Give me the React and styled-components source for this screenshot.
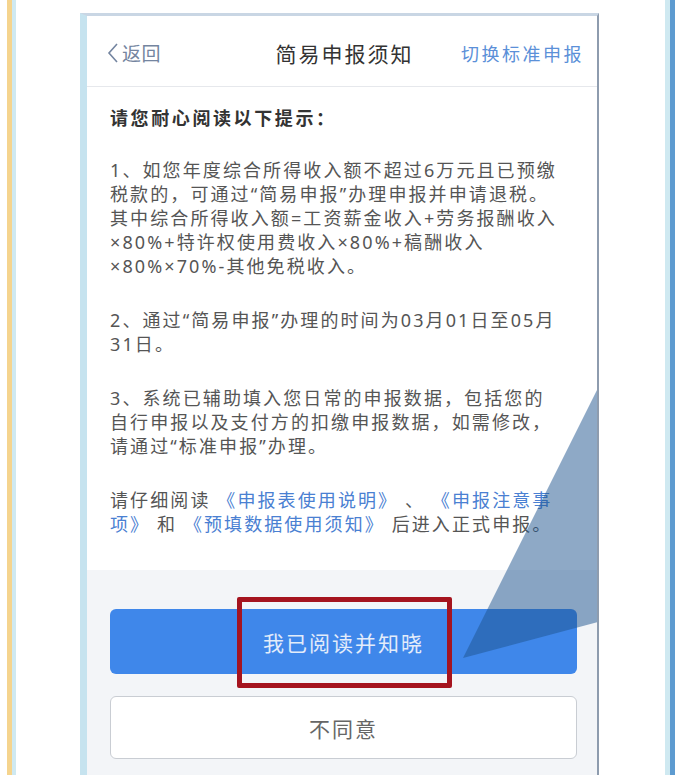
import React from 'react';
import styled, { createGlobalStyle } from 'styled-components';

const GlobalStyle = createGlobalStyle`
  *, *::before, *::after {
    box-sizing: border-box;
  }
  html, body {
    margin: 0;
    padding: 0;
    background: #fff;
  }
  body {
    font-family: "Noto Sans", "Noto Sans CJK SC", sans-serif;
  }
`;

const Page = styled.div`
  display: flex;
  height: 775px;
  overflow: hidden;
  background: #fff;
`;

const Stripe = styled.div`
  flex: none;
  width: ${props => props.w}px;
  background: ${props => props.color};
`;

const Gap = styled.div`
  flex: none;
  width: ${props => props.w}px;
`;

const Phone = styled.div`
  position: relative;
  flex: none;
  width: 519px;
  margin-top: 13px;
  display: flex;
  flex-direction: column;
  background: #fff;
  border-top: 3px solid #c9d6e4;
  border-left: 7px solid #c6e3ef;
  border-right: 2px solid #8e9cae;
  overflow: hidden;
`;

const NavBar = styled.div`
  display: grid;
  grid-template-columns: 1fr auto 1fr;
  align-items: center;
  height: 71px;
  padding: 4px 15px 0 20px;
  border-bottom: 1px solid #e6e8ec;
`;

const BackLink = styled.div`
  display: flex;
  align-items: center;
  gap: 3px;
  color: #7485a0;
  font-size: 19px;
  letter-spacing: 0.5px;
`;

const Title = styled.div`
  color: #333;
  font-size: 21px;
  letter-spacing: 2px;
`;

const SwitchLink = styled.div`
  justify-self: end;
  color: #5b90d8;
  font-size: 18px;
  letter-spacing: 2.5px;
  margin-right: -2px;
`;

const Body = styled.div`
  flex: 1;
  padding: 19px 19px 0 23px;
  color: #555;
`;

const Heading = styled.div`
  color: #333;
  font-size: 18px;
  font-weight: bold;
  letter-spacing: 2.6px;
  line-height: 24px;
  margin-bottom: 28px;
`;

const Para = styled.p`
  margin: 0 0 30px;
  font-size: 18px;
  letter-spacing: 2.1px;
  line-height: 24px;
  white-space: nowrap;
`;

const DocLink = styled.span`
  color: #4a80d2;
`;

const Footer = styled.div`
  flex: none;
  height: 205px;
  display: flex;
  flex-direction: column;
  gap: 22px;
  padding: 39px 20px 0 23px;
  background: #f3f5f8;
`;

const Button = styled.div`
  position: relative;
  height: ${props => (props.primary ? 65 : 63)}px;
  display: flex;
  align-items: center;
  justify-content: center;
  border-radius: 6px;
  font-family: "Noto Sans CJK SC", sans-serif;
  font-size: 21px;
  letter-spacing: 2px;
  background: ${props => (props.primary ? '#3f87ea' : '#fff')};
  color: ${props => (props.primary ? '#e3ecfa' : '#666')};
  border: ${props => (props.primary ? 'none' : '1px solid #c9cdd3')};
`;

const Highlight = styled.div`
  position: absolute;
  left: 127px;
  top: -12px;
  width: 215px;
  height: 91px;
  border: 5px solid #a5141f;
  border-radius: 2px;
`;

const Pointer = styled.svg`
  position: absolute;
  left: 0;
  top: 0;
  pointer-events: none;
`;

const Chevron = () => (
  <svg width="12" height="22" viewBox="0 0 12 22">
    <path d="M10 2 L2 11 L10 20" fill="none" stroke="#7485a0" strokeWidth="1.6" />
  </svg>
);

export default function App() {
  return (
    <>
      <GlobalStyle />
      <Page>
        <Gap w={7} />
        <Stripe w={5} color="#f5d48e" />
        <Stripe w={4} color="#cfe9f1" />
        <Gap w={64} />
        <Phone>
          <NavBar>
            <BackLink>
              <Chevron />
              返回
            </BackLink>
            <Title>简易申报须知</Title>
            <SwitchLink>切换标准申报</SwitchLink>
          </NavBar>
          <Body>
            <Heading>请您耐心阅读以下提示：</Heading>
            <Para>
              1、如您年度综合所得收入额不超过6万元且已预缴<br />
              税款的，可通过“简易申报”办理申报并申请退税。<br />
              其中综合所得收入额=工资薪金收入+劳务报酬收入<br />
              ×80%+特许权使用费收入×80%+稿酬收入<br />
              ×80%×70%-其他免税收入。
            </Para>
            <Para>
              2、通过“简易申报”办理的时间为03月01日至05月<br />
              31日。
            </Para>
            <Para>
              3、系统已辅助填入您日常的申报数据，包括您的<br />
              自行申报以及支付方的扣缴申报数据，如需修改，<br />
              请通过“标准申报”办理。
            </Para>
            <Para>
              请仔细阅读 <DocLink>《申报表使用说明》</DocLink> 、 <DocLink>《申报注意事</DocLink><br />
              <DocLink>项》</DocLink> 和 <DocLink>《预填数据使用须知》</DocLink> 后进入正式申报。
            </Para>
          </Body>
          <Footer>
            <Button primary>
              我已阅读并知晓
              <Highlight />
            </Button>
            <Button>不同意</Button>
          </Footer>
          <Pointer width="510" height="760" viewBox="0 0 510 760">
            <polygon points="511,372 376,642 511,606" fill="rgba(29,83,141,0.5)" />
          </Pointer>
        </Phone>
        <Gap w={66} />
        <Stripe w={5} color="#cfe9f1" />
        <Stripe w={5} color="#5d9bd0" />
      </Page>
    </>
  );
}
